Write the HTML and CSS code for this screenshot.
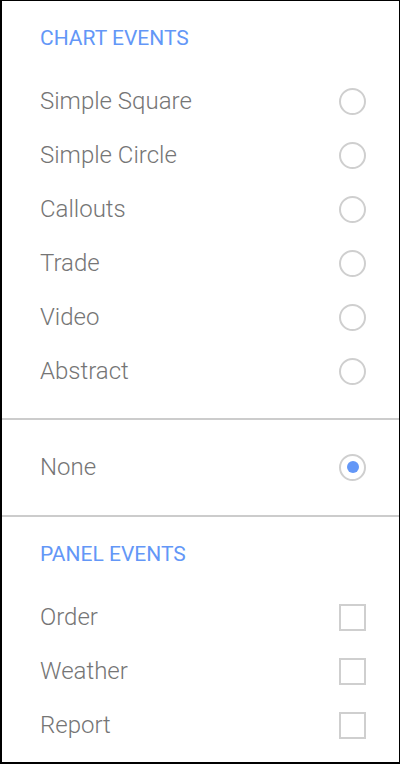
FILE: index.html
```html
<!DOCTYPE html>
<html lang="en">
<head>
    <meta charset="UTF-8">
    <meta name="viewport" content="width=device-width, initial-scale=1.0">
    <title>Events</title>
    <link rel="stylesheet" href="styles.css">
</head>
<body>
    <div class="panel">
        <div class="section">
            <h2 class="section-title">CHART EVENTS</h2>
            <div class="option"><span>Simple Square</span><span class="radio"></span></div>
            <div class="option"><span>Simple Circle</span><span class="radio"></span></div>
            <div class="option"><span>Callouts</span><span class="radio"></span></div>
            <div class="option"><span>Trade</span><span class="radio"></span></div>
            <div class="option"><span>Video</span><span class="radio"></span></div>
            <div class="option"><span>Abstract</span><span class="radio"></span></div>
        </div>
        <div class="section section-none">
            <div class="option"><span>None</span><span class="radio checked"></span></div>
        </div>
        <div class="section">
            <h2 class="section-title">PANEL EVENTS</h2>
            <div class="option"><span>Order</span><span class="checkbox"></span></div>
            <div class="option"><span>Weather</span><span class="checkbox"></span></div>
            <div class="option"><span>Report</span><span class="checkbox"></span></div>
        </div>
    </div>
</body>
</html>
```

FILE: styles.css
```css
* {
    box-sizing: border-box;
}
body {
    margin: 0;
    font-family: Roboto, "Liberation Sans", sans-serif;
    background: #fff;
}
.panel {
    width: 400px;
    height: 764px;
    border: 1px solid #000;
    border-left-width: 2px;
    border-bottom-width: 2px;
}
.section {
    padding: 20px 33px 20px 38px;
    border-bottom: 2px solid #ccc;
}
.section:last-child {
    border-bottom: none;
}
.section-none {
    padding-bottom: 21px;
}
.section-title {
    margin: 0 0 19px;
    height: 34px;
    line-height: 34px;
    font-size: 21px;
    font-weight: 400;
    color: #6397f7;
}
.option {
    display: flex;
    align-items: center;
    justify-content: space-between;
    height: 54px;
    font-size: 24px;
    font-weight: 300;
    color: #757575;
}
.radio {
    width: 27px;
    height: 27px;
    border: 2px solid #cfcfcf;
    border-radius: 50%;
    display: flex;
    align-items: center;
    justify-content: center;
}
.radio.checked::after {
    content: "";
    width: 12px;
    height: 12px;
    border-radius: 50%;
    background: #6397f7;
}
.checkbox {
    width: 27px;
    height: 27px;
    border: 2px solid #cfcfcf;
}
```
